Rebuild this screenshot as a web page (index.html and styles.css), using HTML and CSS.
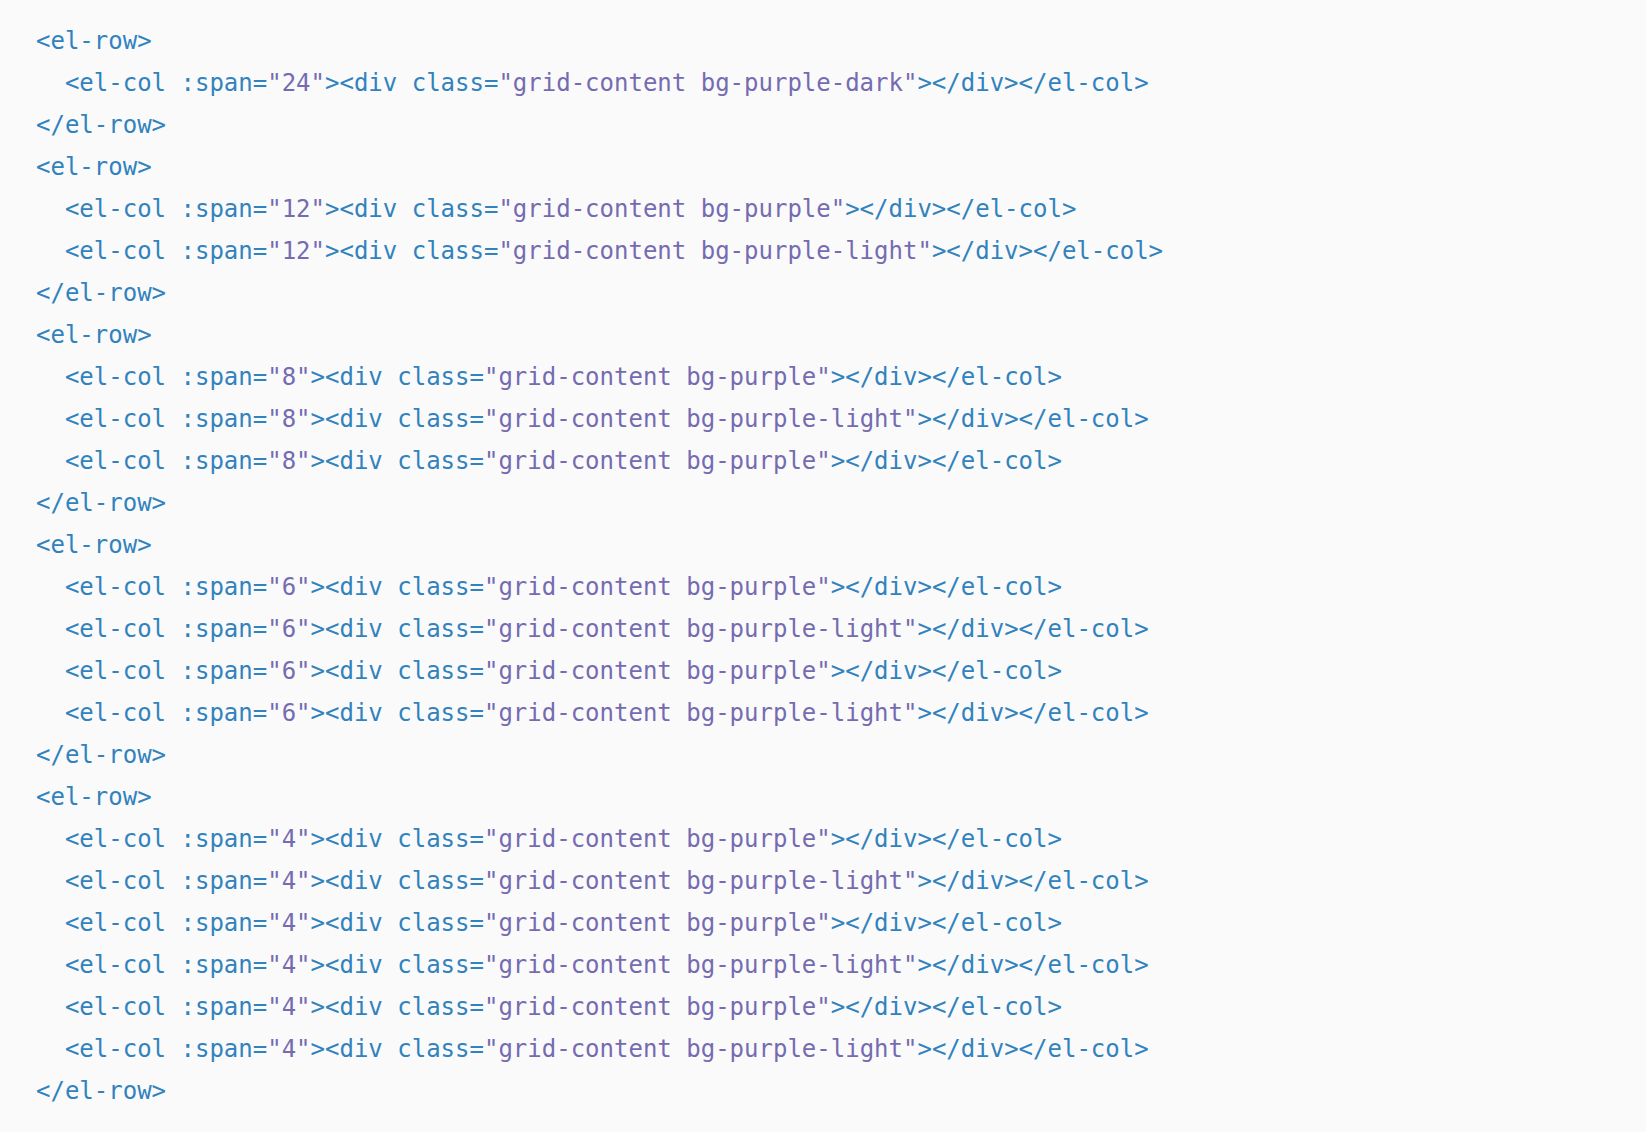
FILE: index.html
```html
<!DOCTYPE html>
<html>
<head>
<meta charset="utf-8">
<link rel="stylesheet" href="styles.css">
</head>
<body>
<pre class="code"><code><span class="t">&lt;el-row&gt;</span>
  <span class="t">&lt;el-col :span=</span><span class="s">"24"</span><span class="t">&gt;&lt;div class=</span><span class="s">"grid-content bg-purple-dark"</span><span class="t">&gt;&lt;/div&gt;&lt;/el-col&gt;</span>
<span class="t">&lt;/el-row&gt;</span>
<span class="t">&lt;el-row&gt;</span>
  <span class="t">&lt;el-col :span=</span><span class="s">"12"</span><span class="t">&gt;&lt;div class=</span><span class="s">"grid-content bg-purple"</span><span class="t">&gt;&lt;/div&gt;&lt;/el-col&gt;</span>
  <span class="t">&lt;el-col :span=</span><span class="s">"12"</span><span class="t">&gt;&lt;div class=</span><span class="s">"grid-content bg-purple-light"</span><span class="t">&gt;&lt;/div&gt;&lt;/el-col&gt;</span>
<span class="t">&lt;/el-row&gt;</span>
<span class="t">&lt;el-row&gt;</span>
  <span class="t">&lt;el-col :span=</span><span class="s">"8"</span><span class="t">&gt;&lt;div class=</span><span class="s">"grid-content bg-purple"</span><span class="t">&gt;&lt;/div&gt;&lt;/el-col&gt;</span>
  <span class="t">&lt;el-col :span=</span><span class="s">"8"</span><span class="t">&gt;&lt;div class=</span><span class="s">"grid-content bg-purple-light"</span><span class="t">&gt;&lt;/div&gt;&lt;/el-col&gt;</span>
  <span class="t">&lt;el-col :span=</span><span class="s">"8"</span><span class="t">&gt;&lt;div class=</span><span class="s">"grid-content bg-purple"</span><span class="t">&gt;&lt;/div&gt;&lt;/el-col&gt;</span>
<span class="t">&lt;/el-row&gt;</span>
<span class="t">&lt;el-row&gt;</span>
  <span class="t">&lt;el-col :span=</span><span class="s">"6"</span><span class="t">&gt;&lt;div class=</span><span class="s">"grid-content bg-purple"</span><span class="t">&gt;&lt;/div&gt;&lt;/el-col&gt;</span>
  <span class="t">&lt;el-col :span=</span><span class="s">"6"</span><span class="t">&gt;&lt;div class=</span><span class="s">"grid-content bg-purple-light"</span><span class="t">&gt;&lt;/div&gt;&lt;/el-col&gt;</span>
  <span class="t">&lt;el-col :span=</span><span class="s">"6"</span><span class="t">&gt;&lt;div class=</span><span class="s">"grid-content bg-purple"</span><span class="t">&gt;&lt;/div&gt;&lt;/el-col&gt;</span>
  <span class="t">&lt;el-col :span=</span><span class="s">"6"</span><span class="t">&gt;&lt;div class=</span><span class="s">"grid-content bg-purple-light"</span><span class="t">&gt;&lt;/div&gt;&lt;/el-col&gt;</span>
<span class="t">&lt;/el-row&gt;</span>
<span class="t">&lt;el-row&gt;</span>
  <span class="t">&lt;el-col :span=</span><span class="s">"4"</span><span class="t">&gt;&lt;div class=</span><span class="s">"grid-content bg-purple"</span><span class="t">&gt;&lt;/div&gt;&lt;/el-col&gt;</span>
  <span class="t">&lt;el-col :span=</span><span class="s">"4"</span><span class="t">&gt;&lt;div class=</span><span class="s">"grid-content bg-purple-light"</span><span class="t">&gt;&lt;/div&gt;&lt;/el-col&gt;</span>
  <span class="t">&lt;el-col :span=</span><span class="s">"4"</span><span class="t">&gt;&lt;div class=</span><span class="s">"grid-content bg-purple"</span><span class="t">&gt;&lt;/div&gt;&lt;/el-col&gt;</span>
  <span class="t">&lt;el-col :span=</span><span class="s">"4"</span><span class="t">&gt;&lt;div class=</span><span class="s">"grid-content bg-purple-light"</span><span class="t">&gt;&lt;/div&gt;&lt;/el-col&gt;</span>
  <span class="t">&lt;el-col :span=</span><span class="s">"4"</span><span class="t">&gt;&lt;div class=</span><span class="s">"grid-content bg-purple"</span><span class="t">&gt;&lt;/div&gt;&lt;/el-col&gt;</span>
  <span class="t">&lt;el-col :span=</span><span class="s">"4"</span><span class="t">&gt;&lt;div class=</span><span class="s">"grid-content bg-purple-light"</span><span class="t">&gt;&lt;/div&gt;&lt;/el-col&gt;</span>
<span class="t">&lt;/el-row&gt;</span></code></pre>
</body>
</html>
```
FILE: styles.css
```css
html, body {
  margin: 0;
  padding: 0;
  background: #fafafa;
}
.code {
  margin: 0;
  padding: 20px 36px;
  font-family: "DejaVu Sans Mono", monospace;
  font-size: 24px;
  line-height: 42px;
  color: #3182bd;
  background: #fafafa;
}
.t { color: #3182bd; }
.s { color: #756bb1; }
```
